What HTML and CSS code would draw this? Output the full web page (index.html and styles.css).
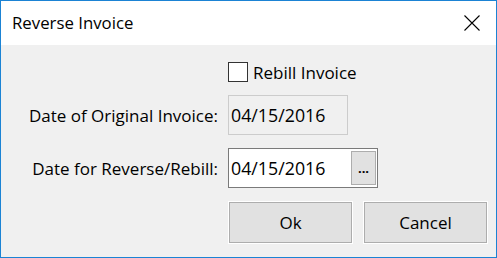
FILE: index.html
```html
<!DOCTYPE html>
<html>
<head>
<meta charset="utf-8">
<link rel="stylesheet" href="styles.css">
</head>
<body>
<div class="window">
  <div class="titlebar">
    <span class="title">Reverse Invoice</span>
    <svg class="close" width="16" height="16" viewBox="0 0 16 16"><path d="M0.5 0.5 L15.5 15.5 M15.5 0.5 L0.5 15.5" stroke="#000" stroke-width="1.1" fill="none"/></svg>
  </div>
  <div class="content">
    <div class="form">
      <div></div>
      <label class="check"><span class="box"></span><span>Rebill Invoice</span></label>

      <div class="label">Date of Original Invoice:</div>
      <div class="field readonly">04/15/2016</div>

      <div class="label">Date for Reverse/Rebill:</div>
      <div class="field edit"><span class="val">04/15/2016</span><span class="dots">...</span></div>

      <div></div>
      <div class="buttons">
        <button class="btn">Ok</button>
        <button class="btn">Cancel</button>
      </div>
    </div>
  </div>
</div>
</body>
</html>
```

FILE: styles.css
```css
* { box-sizing: border-box; }
html, body { margin: 0; padding: 0; }
body {
  width: 497px;
  height: 258px;
  background: #f0f0f0;
  font-family: "Open Sans", "Noto Sans", sans-serif;
  font-size: 17px;
  color: #000;
  overflow: hidden;
}
.window {
  width: 497px;
  height: 258px;
  border: 1px solid #1b83d4;
  background: #f0f0f0;
  display: flex;
  flex-direction: column;
}
.titlebar {
  height: 44px;
  background: #fff;
  display: flex;
  align-items: center;
  justify-content: space-between;
  padding: 0 16px 0 11px;
  flex: none;
}
.title { font-size: 16.8px; padding-bottom: 1px; }
.close { display: block; margin-top: -1px; }
.content { padding-top: 17px; }
.form {
  display: grid;
  grid-template-columns: 217px auto;
  column-gap: 10px;
  row-gap: 13px;
  align-items: center;
}
.label { text-align: right; }
.check { display: flex; align-items: center; height: 20px; }
.box {
  width: 20px; height: 20px;
  border: 1px solid #333;
  background: #fff;
  margin-right: 5px;
}
.field {
  height: 40px;
  display: flex;
  align-items: center;
  padding-left: 2px;
  font-size: 17.8px;
}
.readonly {
  width: 120px;
  border: 1px solid #cccccc;
  background: #f0f0f0;
}
.edit {
  width: 150px;
  border: 1px solid #7a7a7a;
  background: #fff;
  justify-content: space-between;
  padding-right: 1px;
}
.dots {
  width: 25px; height: 34px;
  background: #e1e1e1;
  border: 1px solid #adadad;
  display: flex; align-items: center; justify-content: center;
  font-size: 13px; font-weight: bold; padding-bottom: 1px;
}
.buttons { display: flex; gap: 10px; }
.btn {
  width: 125px; height: 43px;
  border: 1px solid #fff;
  box-shadow: inset 0 0 0 1px #adadad;
  background: #e1e1e1;
  font-family: inherit;
  font-size: 17px;
  color: #000;
  padding: 0;
  margin: 0;
}
```
